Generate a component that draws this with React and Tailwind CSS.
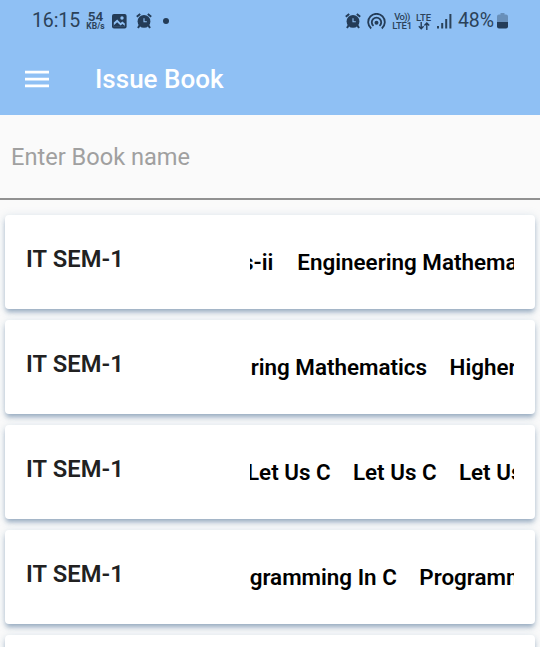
const books = [
  { title: 's-ii', next: ['Engineering Mathematics-ii'], shift: '-ml-[8px]', gap: 'gap-[24px]' },
  { title: 'ring Mathematics', next: ['Higher Engineering'], shift: 'ml-[0.7px]', gap: 'gap-[22.5px]' },
  { title: 'Let Us C', next: ['Let Us C', 'Let Us C'], shift: '-ml-[3px]', gap: 'gap-[22.3px]' },
  { title: 'gramming In C', next: ['Programming In C'], shift: '-ml-[0.3px]', gap: 'gap-[22.5px]' },
  { title: '', next: [], shift: 'ml-0', gap: 'gap-6' },
];

function Alarm() {
  return (
    <svg className="h-4 w-4 shrink-0" viewBox="0 0 16 16" fill="none">
      <path d="M.8 3.8 4.2 1M15.2 3.8 11.8 1M3.8 12 2 15M12.2 12l1.8 3" stroke="#243c57" strokeWidth="2" />
      <circle cx="8" cy="8.4" r="6.4" fill="#243c57" />
      <path d="M8 5.2v3.6h2.8" stroke="#8fc0f4" strokeWidth="1.1" />
    </svg>
  );
}

function StatusBar() {
  return (
    <div className="flex h-[42px] items-center pl-[32px] text-[#2b4259]">
      <span className="w-[54px] text-[19.5px] leading-none tracking-[-0.1px]">16:15</span>
      <div className="flex w-[19px] flex-col items-center leading-none">
        <span className="text-[13.5px] font-semibold leading-[11px]">54</span>
        <span className="text-[8.5px] font-bold leading-[9px]">KB/s</span>
      </div>
      <svg className="ml-[6px] h-[16px] w-[16px] shrink-0" viewBox="0 0 16 16">
        <rect x="1" y="1" width="14.6" height="14.4" rx="2" fill="#243c57" />
        <path d="m2.8 9.6 3.4-3 3.4 3.3 1.8-1.4 2.4 2v3H2.8Z" fill="#8fc0f4" />
        <path d="m2.8 12.2 3.4-3 3.4 3.3 1.8-1.4 2.4 1.6v1H2.8Z" fill="#243c57" />
        <circle cx="11" cy="5" r="1.7" fill="#8fc0f4" />
      </svg>
      <div className="ml-[9px] flex"><Alarm /></div>
      <span className="ml-[11px] h-[5.5px] w-[5.5px] rounded-full bg-[#243c57]" />
      <div className="ml-[176.5px] flex"><Alarm /></div>
      <svg className="ml-[6px] h-[17px] w-[19px] shrink-0" viewBox="0 0 19 17" fill="none" stroke="#243c57" strokeWidth="1.8">
        <path d="M4.2 15.5a8.3 8.3 0 1 1 10.6 0M6.5 12.9a4.7 4.7 0 1 1 6 0" />
        <circle cx="9.5" cy="9.7" r="2" fill="#243c57" stroke="none" />
      </svg>
      <div className="ml-[6px] flex w-[20px] flex-col items-center text-[9.5px] font-medium leading-[9px]">
        <span className="text-[9.5px] tracking-[-0.6px]">Vo))</span>
        <span className="tracking-[-0.2px]">LTE1</span>
      </div>
      <div className="ml-[3px] flex w-[17px] flex-col items-center text-[9.5px] font-medium leading-[9px]">
        <span>LTE</span>
        <svg className="h-[8px] w-[12px]" viewBox="0 0 12 8" fill="none" stroke="#243c57" strokeWidth="1.4">
          <path d="M3.2 0v6.5M.8 4.2l2.4 2.5 2.4-2.5M8.8 8V1.2M6.4 3.6l2.4-2.5 2.4 2.5" />
        </svg>
      </div>
      <svg className="ml-[5px] h-[15px] w-[15px] shrink-0" viewBox="0 0 15 15" fill="#2b4259">
        <path d="M0 12h2v2.5H0zM4.2 9h2v5.5h-2zM8.2 5h2v9.5h-2zM12.4 0h2v14.5h-2z" />
      </svg>
      <span className="ml-[6px] w-[37px] text-[19.5px] leading-none tracking-[-0.1px]">48%</span>
      <svg className="ml-[2px] h-[16px] w-[11px] shrink-0" viewBox="0 0 11 16">
        <path d="M3.5 0h4v1.5H9A2 2 0 0 1 11 3.5V9H0V3.5a2 2 0 0 1 2-2h1.5Z" fill="#688fb9" />
        <path d="M0 9h11v4.5a2 2 0 0 1-2 2H2a2 2 0 0 1-2-2Z" fill="#243c57" />
      </svg>
    </div>
  );
}

function BookCard({ book }) {
  return (
    <div className="flex h-[94px] shrink-0 items-start rounded-[4px] bg-white pl-[21px] pr-[20px] shadow-[0_4px_5px_-1px_rgba(110,138,168,0.65),0_1px_8px_rgba(130,160,190,0.28)]">
      <span className="mt-[30px] w-[224px] shrink-0 whitespace-nowrap text-[23.7px] font-semibold leading-[28px] tracking-[0.1px] text-[#212121]">IT SEM-1</span>
      <div className="mt-[33px] w-[264px] shrink-0 overflow-hidden text-[22.4px] font-semibold leading-[28px] text-black">
        <div className={`flex whitespace-nowrap ${book.gap} ${book.shift}`}>
          <span>{book.title}</span>
          {book.next.map((t, i) => <span key={i}>{t}</span>)}
        </div>
      </div>
    </div>
  );
}

export default function App() {
  return (
    <div className="h-[647px] w-[540px] overflow-hidden bg-[#fafafa] font-[Roboto,sans-serif]">
      <header className="h-[115px] bg-[#8fc0f4]">
        <StatusBar />
        <div className="flex h-[73px] items-center pl-[25px] text-white">
          <svg className="h-[18px] w-[24px]" viewBox="0 0 24 18" fill="currentColor">
            <path d="M0 .7h24v2.7H0zM0 7.7h24v2.7H0zM0 14.6h24v2.7H0z" />
          </svg>
          <h1 className="ml-[46px] text-[26px] font-medium leading-none">Issue Book</h1>
        </div>
      </header>
      <div className="flex h-[85px] items-center border-b-2 border-[#919191] pl-[11px] pt-[2px] text-[23.6px] text-[#a0a0a0]">
        <span>Enter Book name</span>
      </div>
      <main className="flex flex-col gap-[11px] px-[5px] pt-[15px]">
        {books.map((b, i) => <BookCard key={i} book={b} />)}
      </main>
    </div>
  );
}
